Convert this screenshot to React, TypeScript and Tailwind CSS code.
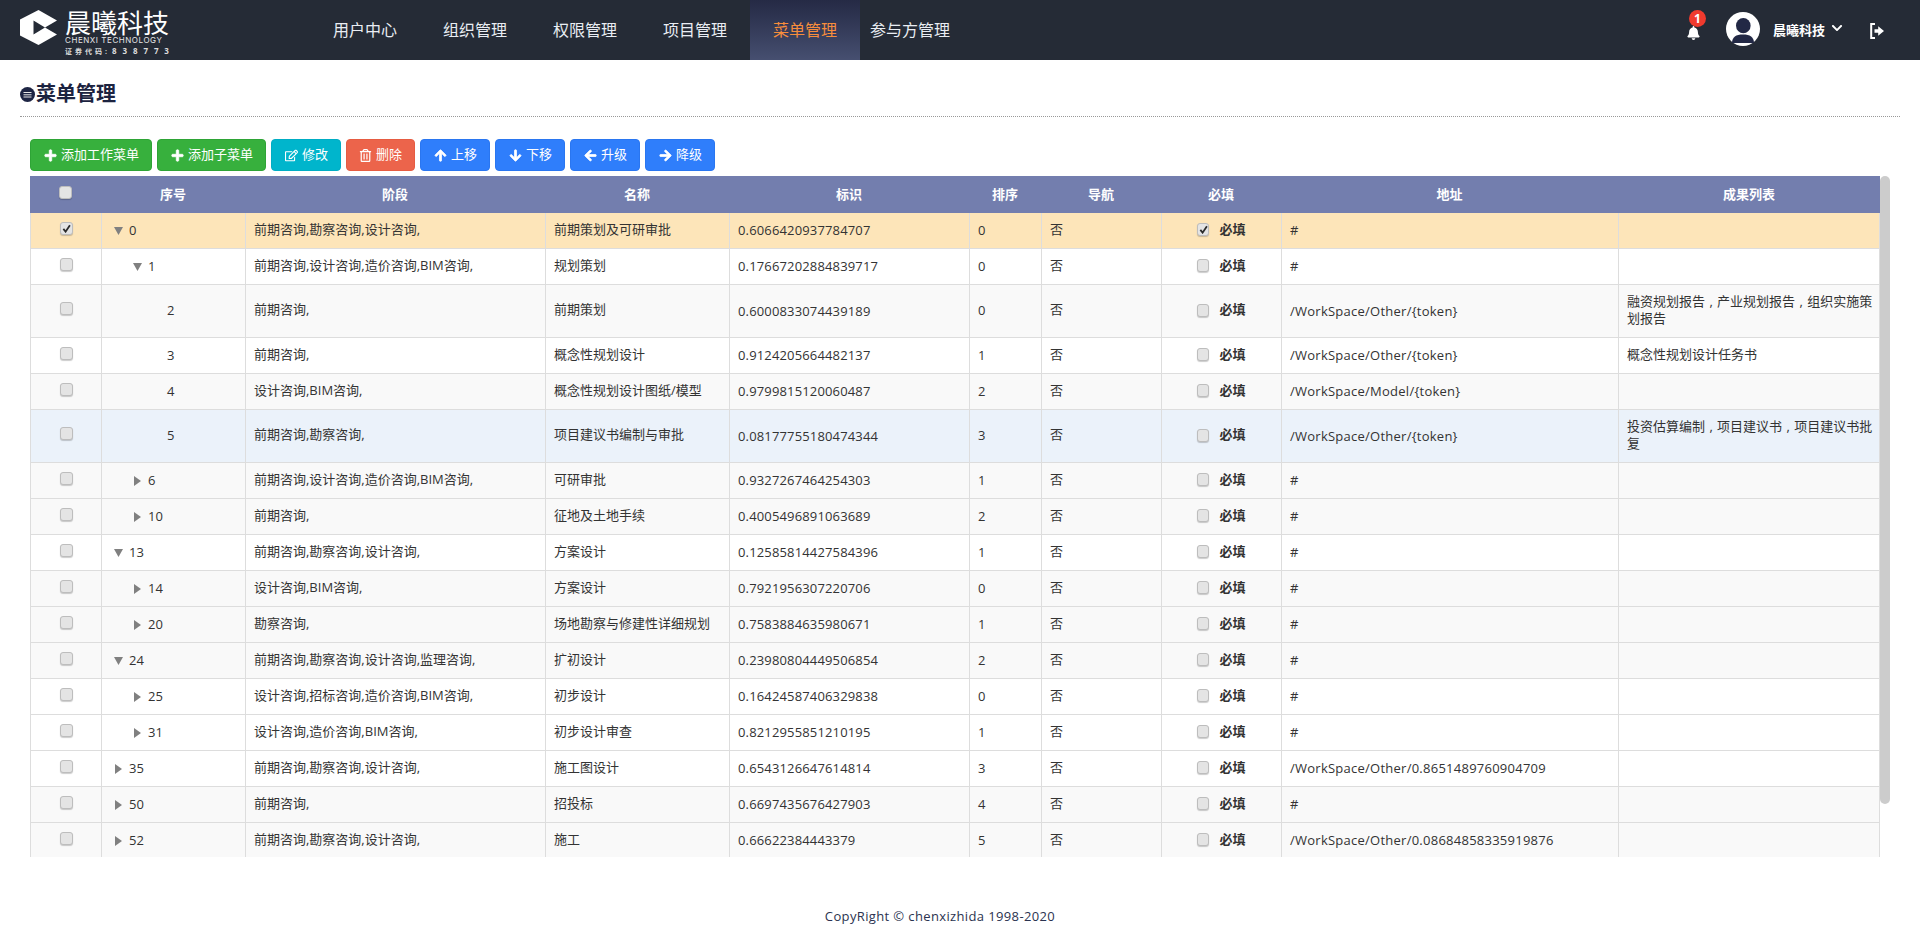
import React from "react";
import {
  FaPlus,
  FaRegEdit,
  FaRegTrashAlt,
  FaArrowUp,
  FaArrowDown,
  FaArrowLeft,
  FaArrowRight,
  FaBell,
  FaChevronDown,
} from "react-icons/fa";

type Row = {
  no: string;
  level: 0 | 1 | 2;
  arrow?: "down" | "right";
  stage: string;
  name: string;
  id: string;
  order: string;
  addr: string;
  results?: string[];
  bg: string;
  tall?: boolean;
  checked?: boolean;
};

const W = "bg-white";
const G = "bg-[#f9f9f9]";

const rows: Row[] = [
  { no: "0", level: 0, arrow: "down", stage: "前期咨询,勘察咨询,设计咨询,", name: "前期策划及可研审批", id: "0.6066420937784707", order: "0", addr: "#", bg: "bg-[#fde5b9]", checked: true },
  { no: "1", level: 1, arrow: "down", stage: "前期咨询,设计咨询,造价咨询,BIM咨询,", name: "规划策划", id: "0.17667202884839717", order: "0", addr: "#", bg: W },
  { no: "2", level: 2, stage: "前期咨询,", name: "前期策划", id: "0.6000833074439189", order: "0", addr: "/WorkSpace/Other/{token}", results: ["融资规划报告 , 产业规划报告 , 组织实施策", "划报告"], bg: G, tall: true },
  { no: "3", level: 2, stage: "前期咨询,", name: "概念性规划设计", id: "0.9124205664482137", order: "1", addr: "/WorkSpace/Other/{token}", results: ["概念性规划设计任务书"], bg: W },
  { no: "4", level: 2, stage: "设计咨询,BIM咨询,", name: "概念性规划设计图纸/模型", id: "0.9799815120060487", order: "2", addr: "/WorkSpace/Model/{token}", bg: G },
  { no: "5", level: 2, stage: "前期咨询,勘察咨询,", name: "项目建议书编制与审批", id: "0.08177755180474344", order: "3", addr: "/WorkSpace/Other/{token}", results: ["投资估算编制 , 项目建议书 , 项目建议书批", "复"], bg: "bg-[#ebf2fa]", tall: true },
  { no: "6", level: 1, arrow: "right", stage: "前期咨询,设计咨询,造价咨询,BIM咨询,", name: "可研审批", id: "0.9327267464254303", order: "1", addr: "#", bg: G },
  { no: "10", level: 1, arrow: "right", stage: "前期咨询,", name: "征地及土地手续", id: "0.4005496891063689", order: "2", addr: "#", bg: G },
  { no: "13", level: 0, arrow: "down", stage: "前期咨询,勘察咨询,设计咨询,", name: "方案设计", id: "0.12585814427584396", order: "1", addr: "#", bg: W },
  { no: "14", level: 1, arrow: "right", stage: "设计咨询,BIM咨询,", name: "方案设计", id: "0.7921956307220706", order: "0", addr: "#", bg: G },
  { no: "20", level: 1, arrow: "right", stage: "勘察咨询,", name: "场地勘察与修建性详细规划", id: "0.7583884635980671", order: "1", addr: "#", bg: G },
  { no: "24", level: 0, arrow: "down", stage: "前期咨询,勘察咨询,设计咨询,监理咨询,", name: "扩初设计", id: "0.23980804449506854", order: "2", addr: "#", bg: G },
  { no: "25", level: 1, arrow: "right", stage: "设计咨询,招标咨询,造价咨询,BIM咨询,", name: "初步设计", id: "0.16424587406329838", order: "0", addr: "#", bg: W },
  { no: "31", level: 1, arrow: "right", stage: "设计咨询,造价咨询,BIM咨询,", name: "初步设计审查", id: "0.8212955851210195", order: "1", addr: "#", bg: W },
  { no: "35", level: 0, arrow: "right", stage: "前期咨询,勘察咨询,设计咨询,", name: "施工图设计", id: "0.6543126647614814", order: "3", addr: "/WorkSpace/Other/0.8651489760904709", bg: W },
  { no: "50", level: 0, arrow: "right", stage: "前期咨询,", name: "招投标", id: "0.6697435676427903", order: "4", addr: "#", bg: G },
  { no: "52", level: 0, arrow: "right", stage: "前期咨询,勘察咨询,设计咨询,", name: "施工", id: "0.66622384443379", order: "5", addr: "/WorkSpace/Other/0.08684858335919876", bg: G },
];

const headers = ["序号", "阶段", "名称", "标识", "排序", "导航", "必填", "地址", "成果列表"];
const widths = [71, 144, 300, 184, 240, 72, 120, 120, 337, 262];
const indent = ["pl-0", "pl-[19px]", "pl-[38px]"];

function Check({ on, narrow, className }: { on?: boolean; narrow?: boolean; className?: string }) {
  return (
    <span
      className={`flex h-[13px] shrink-0 items-center justify-center rounded-[3px] border border-[#bdbdbd] bg-[#e4e4e4] shadow-[0_1px_1px_rgba(0,0,0,0.2)] ${narrow ? "w-[12px]" : "w-[13px]"} ${className ?? ""}`}
    >
      {on && (
        <svg viewBox="0 0 10 10" className="h-[9px] w-[9px]">
          <path d="M1.5 5.5 L4 8.5 L8.8 1.5" fill="none" stroke="#2b2b2b" strokeWidth="2" />
        </svg>
      )}
    </span>
  );
}

function Arrow({ dir }: { dir?: "down" | "right" }) {
  return (
    <span className="flex w-[19px] shrink-0 items-center justify-start">
      {dir === "down" && (
        <svg viewBox="0 0 9 8" className="ml-[4px] h-[8px] w-[9px]">
          <path d="M0 0 H9 L4.5 8 Z" fill="#808080" />
        </svg>
      )}
      {dir === "right" && (
        <svg viewBox="0 0 7 10" className="ml-[5px] h-[10px] w-[7px]">
          <path d="M0 0 L7 5 L0 10 Z" fill="#808080" />
        </svg>
      )}
    </span>
  );
}

function Logo() {
  return (
    <div className="flex items-start pt-[10px]">
      <svg viewBox="0 0 37 35" className="h-[35px] w-[37px]">
        <path
          d="M18.5 0 L37 10.5 L25 17.5 L37 24.5 L18.5 35 L0 25.5 L0 9.5 Z M13.5 10.5 V24.5 L25 17.5 Z"
          fill="#fff"
          fillRule="evenodd"
        />
      </svg>
      <div className="ml-[8px] w-[105px] text-white">
        <div className="h-[26px] whitespace-nowrap text-[26px] leading-[26px]">晨曦科技</div>
        <div className="h-[9px] whitespace-nowrap font-['Inter',sans-serif] text-[8px] leading-[9px] tracking-[0.55px] text-[#e6e6e6]">
          CHENXI TECHNOLOGY
        </div>
        <div className="h-[11px] whitespace-nowrap text-[7px] font-bold leading-[11px] text-[#dcdcdc]">
          <span className="tracking-[3px]">证券代码:</span>
          <span className="ml-[2px] text-[8px] tracking-[5.9px]">838773</span>
        </div>
      </div>
    </div>
  );
}

function Btn({ color, icon, label, iconBox = "w-[14px]" }: { color: string; icon: React.ReactNode; label: string; iconBox?: string }) {
  return (
    <button
      type="button"
      className={`flex h-[32px] items-center gap-[4px] rounded-[4px] border px-[12px] text-[13px] text-white ${color}`}
    >
      <span className={`flex items-center justify-center text-[13px] ${iconBox}`}>{icon}</span>
      {label}
    </button>
  );
}

const bold = { stroke: "currentColor", strokeWidth: 30 };

export default function App() {
  const blue = "border-[#2a76f0] bg-[#2f7efb]";
  return (
    <div className="h-[931px] w-[1920px] overflow-hidden bg-white font-['Open_Sans','Noto_Sans_CJK_SC',sans-serif] text-[13px] text-[#333]">
      <header className="flex h-[60px] items-start bg-[#252b36] pl-[20px]">
        <Logo />
        <nav className="ml-[140px] flex h-[60px] text-[16px] text-[#e9edf3]">
          {["用户中心", "组织管理", "权限管理", "项目管理"].map((t) => (
            <a key={t} className="flex h-full items-center px-[23px]">
              {t}
            </a>
          ))}
          <a className="flex h-full items-center bg-gradient-to-b from-[#252a45] to-[#464f70] px-[23px] text-[#f78d3c]">
            菜单管理
          </a>
          <a className="flex h-full items-center pl-[10px]">参与方管理</a>
        </nav>
        <div className="ml-auto flex h-[60px] items-start pr-[36px] text-white">
          <div className="relative mt-[26px] h-[14px] w-[13px]">
            <FaBell className="h-[14px] w-[13px]" />
            <span className="absolute left-[2px] top-[-16px] flex h-[17px] w-[17px] items-center justify-center rounded-full bg-[#f03a2e] text-[12px] font-bold leading-none text-white">
              1
            </span>
          </div>
          <svg viewBox="0 0 34 34" className="ml-[26px] mt-[12px] h-[34px] w-[34px]">
            <circle cx="17" cy="17" r="17" fill="#fff" />
            <ellipse cx="17.3" cy="13.7" rx="7.3" ry="7.6" fill="#222845" />
            <path d="M6 31 C6 25 10 22.5 17 22.5 S28 25 28 31 Z" fill="#222845" />
          </svg>
          <span className="ml-[13px] mt-[21px] whitespace-nowrap text-[13px] font-bold leading-[18px]">晨曦科技</span>
          <FaChevronDown className="ml-[5px] mt-[22px] h-[12px] w-[14px]" />
          <svg viewBox="0 0 14 16" className="ml-[26px] mt-[23px] h-[16px] w-[14px]">
            <path d="M5 1 H1.2 V15 H5" fill="none" stroke="#fff" strokeWidth="2" />
            <path d="M4.5 6.3 H8.2 V3.2 L14 8 L8.2 12.8 V9.7 H4.5 Z" fill="#fff" />
          </svg>
        </div>
      </header>

      <div className="mx-[20px] flex h-[57px] w-[1880px] items-start border-b border-dotted border-[#999] pt-[24px]">
        <svg viewBox="0 0 15 15" className="mt-[3px] h-[15px] w-[15px]">
          <circle cx="7.5" cy="7.5" r="7.5" fill="#1e2544" />
          <path d="M3.5 5.5 H11.5 M3.5 7.8 H11.5 M3.5 10 H11.5" stroke="#e8e8e8" strokeWidth="1" />
        </svg>
        <h1 className="ml-[1px] text-[20px] font-bold leading-[20px] text-[#1c2340]">菜单管理</h1>
      </div>

      <div className="ml-[30px] mt-[22px] flex gap-[5px]">
        <Btn color="border-[#2ea436] bg-[#37b03d]" icon={<FaPlus {...bold} />} label="添加工作菜单" />
        <Btn color="border-[#2ea436] bg-[#37b03d]" icon={<FaPlus {...bold} />} label="添加子菜单" />
        <Btn color="border-[#00adc4] bg-[#00b5cc]" icon={<FaRegEdit />} label="修改" />
        <Btn color="border-[#e65c42] bg-[#ec644b]" icon={<FaRegTrashAlt />} iconBox="w-[13px]" label="删除" />
        <Btn color={blue} icon={<FaArrowUp {...bold} />} label="上移" />
        <Btn color={blue} icon={<FaArrowDown {...bold} />} label="下移" />
        <Btn color={blue} icon={<FaArrowLeft {...bold} />} label="升级" />
        <Btn color={blue} icon={<FaArrowRight {...bold} />} label="降级" />
      </div>

      <div className="relative ml-[30px] mt-[5px] h-[681px] w-[1860px] overflow-hidden">
        <table className="w-[1850px] table-fixed border-separate border-spacing-0">
          <colgroup>
            {widths.map((w, i) => (
              <col key={i} style={{ width: w }} />
            ))}
          </colgroup>
          <thead>
            <tr className="h-[37px] bg-[#737eae] text-white">
              <th className="p-0">
                <div className="flex justify-center">
                  <Check className="mb-[5px]" />
                </div>
              </th>
              {headers.map((h) => (
                <th key={h} className="p-0 text-center font-bold">
                  {h}
                </th>
              ))}
            </tr>
          </thead>
          <tbody>
            {rows.map((r) => {
              const cell = "border-b border-l border-[#dddddd] px-[8px] whitespace-nowrap";
              return (
                <tr key={r.no} className={`${r.tall ? "h-[53px]" : "h-[36px]"} ${r.bg}`}>
                  <td className="border-b border-l border-[#dddddd] p-0">
                    <div className="flex justify-center">
                      <Check on={r.checked} className="mb-[5px]" />
                    </div>
                  </td>
                  <td className={`${cell} py-0`}>
                    <div className={`flex items-center ${indent[r.level]}`}>
                      <Arrow dir={r.arrow} />
                      {r.no}
                    </div>
                  </td>
                  <td className={`${cell} pb-[2px] pt-0`}>{r.stage}</td>
                  <td className={`${cell} pb-[2px] pt-0`}>{r.name}</td>
                  <td className={`${cell} pb-0 pt-[1px] tracking-[0.15px]`}>{r.id}</td>
                  <td className={`${cell} py-0`}>{r.order}</td>
                  <td className={`${cell} pb-[2px] pt-0`}>否</td>
                  <td className={`${cell} pb-[2px] pt-0`}>
                    <div className="flex items-center justify-center gap-[10px]">
                      <Check on={r.checked} narrow />
                      <span className="font-bold">必填</span>
                    </div>
                  </td>
                  <td className={`${cell} pb-0 pt-[1px] tracking-[0.25px]`}>{r.addr}</td>
                  <td className={`${cell} border-r pb-[2px] pt-0 leading-[17.5px] [word-spacing:1px]`}>
                    {r.results?.map((l) => (
                      <div key={l}>{l}</div>
                    ))}
                  </td>
                </tr>
              );
            })}
          </tbody>
        </table>
        <div className="absolute right-0 top-0 h-[628px] w-[10px] rounded-[5px] bg-[#cccccc]" />
      </div>

      <footer className="mt-[50px] w-[1880px] text-center leading-[18px] tracking-[0.37px] text-[#2b3350]">
        CopyRight © chenxizhida 1998-2020
      </footer>
    </div>
  );
}
